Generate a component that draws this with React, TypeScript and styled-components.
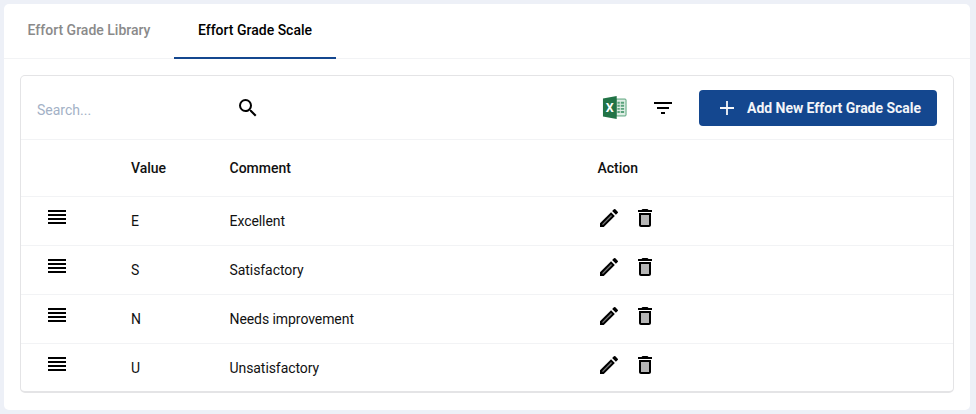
import React from 'react';
import styled, { createGlobalStyle } from 'styled-components';

/* ─── Styled ──────────────────────────────────────────────────────── */
const Global = createGlobalStyle`
  html, body { margin: 0; padding: 0; background: #edf0f7; }
  body { font-family: Roboto, "Liberation Sans", sans-serif; }
  * { box-sizing: border-box; }
`;

const Page = styled.div`
  width: 976px;
  height: 414px;
  padding: 4px 6px 4px 4px;
`;

const Card = styled.div`
  height: 406px;
  background: #fff;
  border-radius: 5px;
`;

const Tabs = styled.div`
  display: flex;
  height: 55px;
  border-bottom: 1px solid #f2f3f5;
`;

const Tab = styled.div<{ $active?: boolean }>`
  display: flex;
  align-items: center;
  justify-content: center;
  width: ${({ $active }) => ($active ? '162px' : '170px')};
  height: 55px;
  padding-bottom: 1px;
  font-size: 14px;
  font-weight: 500;
  color: ${({ $active }) => ($active ? '#000' : '#8a8a8a')};
  border-bottom: 2px solid ${({ $active }) => ($active ? '#14478f' : 'transparent')};
`;

const Panel = styled.div`
  margin: 16px 16px 0;
  height: 318px;
  border: 1px solid #e4e4e6;
  border-bottom-width: 2px;
  border-radius: 5px;
`;

const Toolbar = styled.div`
  display: flex;
  align-items: center;
  height: 64px;
  padding: 0 16px;
  border-bottom: 1px solid #f2f3f5;
`;

const Search = styled.div`
  display: flex;
  align-items: center;
  justify-content: space-between;
  width: 223px;
  font-size: 14px;
  color: #a3b1c6;
`;

const Placeholder = styled.span`
  margin-top: 4px;
`;

const Spacer = styled.div`
  flex: 1;
`;

const IconSlot = styled.div<{ $w: number }>`
  display: flex;
  align-items: center;
  justify-content: flex-start;
  width: ${({ $w }) => $w}px;
`;

const AddButton = styled.div`
  display: flex;
  align-items: center;
  width: 238px;
  height: 36px;
  padding-left: 18px;
  gap: 10px;
  background: #14478f;
  border-radius: 4px;
  color: #f3f5f9;
  font-size: 14px;
  font-weight: 700;
  letter-spacing: -0.03px;
`;

const Row = styled.div<{ $head?: boolean }>`
  display: grid;
  grid-template-columns: 110px 98.5px 368px 1fr;
  align-items: center;
  height: ${({ $head }) => ($head ? '57px' : '49px')};
  border-bottom: 1px solid #f2f3f5;
  font-size: 14px;
  font-weight: ${({ $head }) => ($head ? 500 : 400)};
  letter-spacing: ${({ $head }) => ($head ? '0' : '-0.07px')};
  color: #111;

  &:last-child { border-bottom: none; height: 48px; }
`;

const Handle = styled.div`
  padding: 0 0 7px 27px;
  display: flex;
`;

const Actions = styled.div`
  display: flex;
  align-items: center;
  gap: 12px;
  padding-bottom: 7px;
  margin-left: -1px;
`;

/* ─── Icons ───────────────────────────────────────────────────────── */
const SearchIcon = () => (
  <svg width="24" height="24" viewBox="0 0 24 24" fill="#000">
    <path d="M15.5 14h-.79l-.28-.27A6.47 6.47 0 0 0 16 9.5 6.5 6.5 0 1 0 9.5 16c1.61 0 3.09-.59 4.23-1.57l.27.28v.79l5 4.99L20.49 19l-4.99-5zm-6 0C7.01 14 5 11.99 5 9.5S7.01 5 9.5 5 14 7.01 14 9.5 11.99 14 9.5 14z" />
  </svg>
);

const ExcelIcon = () => (
  <svg width="25" height="25" viewBox="0 0 26 26">
    <path d="M14.5 4.2h9.6c.5 0 .9.4.9.9v15.8c0 .5-.4.9-.9.9h-9.6z" fill="#dfeee5" stroke="#2a8a57" strokeWidth="0.8" />
    <path d="M16 7h2.5v2H16zM19.5 7H23v2h-3.5zM16 10.2h2.5v2H16zM19.5 10.2H23v2h-3.5zM16 13.4h2.5v2H16zM19.5 13.4H23v2h-3.5zM16 16.6h2.5v2H16zM19.5 16.6H23v2h-3.5z" fill="#5aa27c" />
    <path d="M1 3.6 15.3 1v24L1 22.4z" fill="#217346" />
    <text x="4" y="17.6" fontFamily="Roboto, sans-serif" fontWeight="700" fontSize="13" fill="#fff">X</text>
  </svg>
);

const FilterIcon = () => (
  <svg width="24" height="24" viewBox="0 0 24 24" fill="#000">
    <path d="M10 18h4v-2h-4v2zM3 6v2h18V6H3zm3 7h12v-2H6v2z" />
  </svg>
);

const PlusIcon = () => (
  <svg width="20" height="20" viewBox="0 0 20 20" fill="#f6f7fa">
    <path d="M9.1 3h1.8v6.1H17v1.8h-6.1V17H9.1v-6.1H3V9.1h6.1z" />
  </svg>
);

const DragIcon = () => (
  <svg width="18" height="15" viewBox="0 0 18 15" fill="#000">
    <path d="M0 0h18v2H0zM0 4h18v2H0zM0 8h18v2H0zM0 12h18v2H0z" />
  </svg>
);

const EditIcon = () => (
  <svg width="24" height="24" viewBox="0 0 24 24">
    <path d="M3 17.25V21h3.75L17.81 9.94l-3.75-3.75L3 17.25z" fill="#000" />
    <path d="M5 18.2 14.06 9l1 1L6 19.1z" fill="#777" />
    <path d="M20.71 7.04a1 1 0 0 0 0-1.41l-2.34-2.34a1 1 0 0 0-1.41 0l-1.83 1.83 3.75 3.75 1.83-1.83z" fill="#000" />
  </svg>
);

const DeleteIcon = () => (
  <svg width="24" height="24" viewBox="0 0 24 24">
    <path d="M8 9h8v10H8z" fill="#b5b5b5" />
    <path d="M15.5 4l-1-1h-5l-1 1H5v2h14V4zM6 19c0 1.1.9 2 2 2h8c1.1 0 2-.9 2-2V7H6v12zM8 9h8v10H8V9z" fill="#000" />
  </svg>
);

/* ─── Component ──────────────────────────────────────────────────── */
const grades = [
  { value: 'E', comment: 'Excellent' },
  { value: 'S', comment: 'Satisfactory' },
  { value: 'N', comment: 'Needs improvement' },
  { value: 'U', comment: 'Unsatisfactory' },
];

export default function App() {
  return (
    <Page>
      <Global />
      <Card>
        <Tabs>
          <Tab>Effort Grade Library</Tab>
          <Tab $active>Effort Grade Scale</Tab>
        </Tabs>
        <Panel>
          <Toolbar>
            <Search>
              <Placeholder>Search...</Placeholder>
              <SearchIcon />
            </Search>
            <Spacer />
            <IconSlot $w={49}><ExcelIcon /></IconSlot>
            <IconSlot $w={48}><FilterIcon /></IconSlot>
            <AddButton>
              <PlusIcon />
              Add New Effort Grade Scale
            </AddButton>
          </Toolbar>
          <Row $head>
            <div />
            <div>Value</div>
            <div>Comment</div>
            <div>Action</div>
          </Row>
          {grades.map((g) => (
            <Row key={g.value}>
              <Handle><DragIcon /></Handle>
              <div>{g.value}</div>
              <div>{g.comment}</div>
              <Actions>
                <EditIcon />
                <DeleteIcon />
              </Actions>
            </Row>
          ))}
        </Panel>
      </Card>
    </Page>
  );
}
